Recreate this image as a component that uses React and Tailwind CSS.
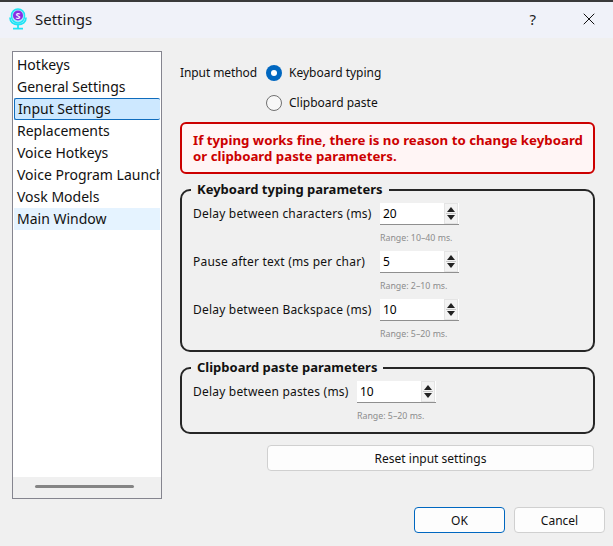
import { X } from "lucide-react";

const navItems = [
  { label: "Hotkeys" },
  { label: "General Settings" },
  { label: "Input Settings", state: "selected" },
  { label: "Replacements" },
  { label: "Voice Hotkeys" },
  { label: "Voice Program Launcher" },
  { label: "Vosk Models" },
  { label: "Main Window", state: "hover" },
];

function AppIcon() {
  return (
    <svg width="20" height="22" viewBox="0 0 20 22" fill="none">
      <path d="M2 9.500c0 4.500 3.500 7 8 7s8-2.500 8-7" stroke="#1fe3f5" strokeWidth="1.800" />
      <path d="M10 16.500v3.500M5 20.600h10" stroke="#1fe3f5" strokeWidth="1.800" />
      <rect x="3.500" y="1" width="13" height="14" rx="6.500" fill="#a8ecfa" stroke="#1fe3f5" strokeWidth="1.500" />
      <circle cx="10" cy="7.500" r="5" fill="#8a2be2" />
      <text x="10" y="10.600" textAnchor="middle" fontSize="9" fontWeight="700" fill="#f4e8ff" fontFamily="Noto Sans, sans-serif">
        S
      </text>
    </svg>
  );
}

function SpinBox({ value }) {
  return (
    <div className="flex h-[22px] w-[79px] border-b border-[#8f8f8f] bg-white">
      <span className="flex-1 pl-[3px] text-[12px] leading-[21px] text-black">{value}</span>
      <div className="mr-[1px] flex w-[14px] flex-col items-center justify-center gap-[1px] border border-[#e4e4e4] bg-[#f3f3f3]">
        <span className="h-0 w-0 border-x-[4px] border-b-[5px] border-x-transparent border-b-[#222]" />
        <span className="h-[1px] w-[10px] bg-[#c8c8c8]" />
        <span className="h-0 w-0 border-x-[4px] border-t-[5px] border-x-transparent border-t-[#222]" />
      </div>
    </div>
  );
}

function ParamRow({ label, value, range, labelWidth }) {
  return (
    <div className="flex h-[48px] flex-col">
      <div className="flex items-center">
        <span className={`whitespace-nowrap text-[12px] leading-[22px] tracking-[0.2px] text-[#111] ${labelWidth}`}>{label}</span>
        <SpinBox value={value} />
      </div>
      <div className="mt-[6px] flex text-[8.800px] leading-[14px] text-[#8c8c8c]">
        <span className={labelWidth} />
        <span>{range}</span>
      </div>
    </div>
  );
}

function Group({ title, className, children }) {
  return (
    <div className={`relative rounded-[10px] border-2 border-[#262626] ${className}`}>
      <span className="absolute -top-[12px] left-[9px] bg-[#f0f0f0] px-[6px] text-[13px] font-bold leading-[20px] text-[#111]">
        {title}
      </span>
      {children}
    </div>
  );
}

export default function App() {
  return (
    <div className="flex h-[546px] w-[613px] flex-col overflow-hidden bg-[#f0f0f0] font-['Noto_Sans',sans-serif]">
      {/* Title bar */}
      <div className="flex h-[38px] items-center border-t-2 border-[#3a3a3a] bg-[#f0f2f9] pb-[2px] pl-[8px]">
        <AppIcon />
        <span className="ml-[7px] text-[15px] text-[#1a1a1a]">Settings</span>
        <span className="ml-auto text-[15px] text-[#222]">?</span>
        <X size={20} strokeWidth={1.200} className="ml-[43px] mr-[14px] text-[#111]" />
      </div>

      <div className="flex flex-1 items-start pl-[12px] pt-[13px]">
        {/* Nav list */}
        <div className="flex h-[448px] w-[150px] flex-col overflow-hidden border border-[#85858f] bg-white pl-[1px] pt-[2px]">
          <div className="flex-1">
            {navItems.map((item) => (
              <div
                key={item.label}
                className={`h-[22px] w-[146px] overflow-hidden whitespace-nowrap pl-[3px] text-[14px] text-[#111] ${
                  item.state === "selected"
                    ? "rounded-[2px] border-y border-l border-[#0f6cbd] bg-[#cde8ff] pl-[2px] pt-[1px] leading-[18px]"
                    : item.state === "hover"
                      ? "bg-[#e5f3ff] leading-[21px]"
                      : "leading-[21px]"
                }`}
              >
                {item.label}
              </div>
            ))}
          </div>
          <div className="-ml-[1px] flex h-[21px] items-center justify-center bg-[#f0f0f0]">
            <span className="-ml-[6px] -mt-[3px] h-[3px] w-[99px] rounded-full bg-[#858585]" />
          </div>
        </div>

        {/* Settings column */}
        <div className="ml-[18px] flex w-[415px] flex-col">
          <div className="flex items-center pt-[12px]">
            <span className="w-[86px] text-[12px] leading-[20px] tracking-[-0.1px] text-[#111]">Input method</span>
            <span className="flex h-[16px] w-[16px] items-center justify-center rounded-full bg-[#0067c0]">
              <span className="h-[6px] w-[6px] rounded-full bg-white" />
            </span>
            <span className="ml-[7px] text-[12px] leading-[20px] text-[#111]">Keyboard typing</span>
          </div>
          <div className="mt-[10px] flex items-center pl-[86px]">
            <span className="h-[16px] w-[16px] rounded-full border border-[#707070] bg-[#f7f7f7]" />
            <span className="ml-[7px] text-[12px] leading-[20px] text-[#111]">Clipboard paste</span>
          </div>

          <div className="mt-[9px] h-[52px] whitespace-nowrap rounded-[6px] border-2 border-[#cc0000] bg-[#fff5f5] pl-[11px] pt-[8px] text-[13.250px] font-bold leading-[16px] text-[#cc0000]">
            If typing works fine, there is no reason to change keyboard
            <br />
            or clipboard paste parameters.
          </div>

          <Group title="Keyboard typing parameters" className="mt-[15px] h-[163px] pl-[11px] pt-[12px]">
            <ParamRow label="Delay between characters (ms)" value="20" range="Range: 10–40 ms." labelWidth="w-[187px]" />
            <ParamRow label="Pause after text (ms per char)" value="5" range="Range: 2–10 ms." labelWidth="w-[187px]" />
            <ParamRow label="Delay between Backspace (ms)" value="10" range="Range: 5–20 ms." labelWidth="w-[187px]" />
          </Group>

          <Group title="Clipboard paste parameters" className="mt-[15px] h-[67px] pl-[11px] pt-[12px]">
            <ParamRow label="Delay between pastes (ms)" value="10" range="Range: 5–20 ms." labelWidth="w-[164px]" />
          </Group>

          <button className="ml-[87px] mt-[11px] h-[26px] w-[327px] rounded-[4px] border border-[#d0d0d0] bg-[#fdfdfd] pt-[2px] text-[12px] text-[#111]">
            Reset input settings
          </button>
        </div>
      </div>

      {/* Dialog buttons */}
      <div className="flex justify-end gap-[9px] pb-[13px] pr-[8px]">
        <button className="h-[26px] w-[91px] rounded-[4px] border border-[#0067c0] bg-[#fdfdfd] pt-[1px] text-[12px] text-[#111]">OK</button>
        <button className="h-[26px] w-[91px] rounded-[4px] border border-[#d0d0d0] bg-[#fdfdfd] pt-[1px] text-[12px] text-[#111]">Cancel</button>
      </div>
    </div>
  );
}
